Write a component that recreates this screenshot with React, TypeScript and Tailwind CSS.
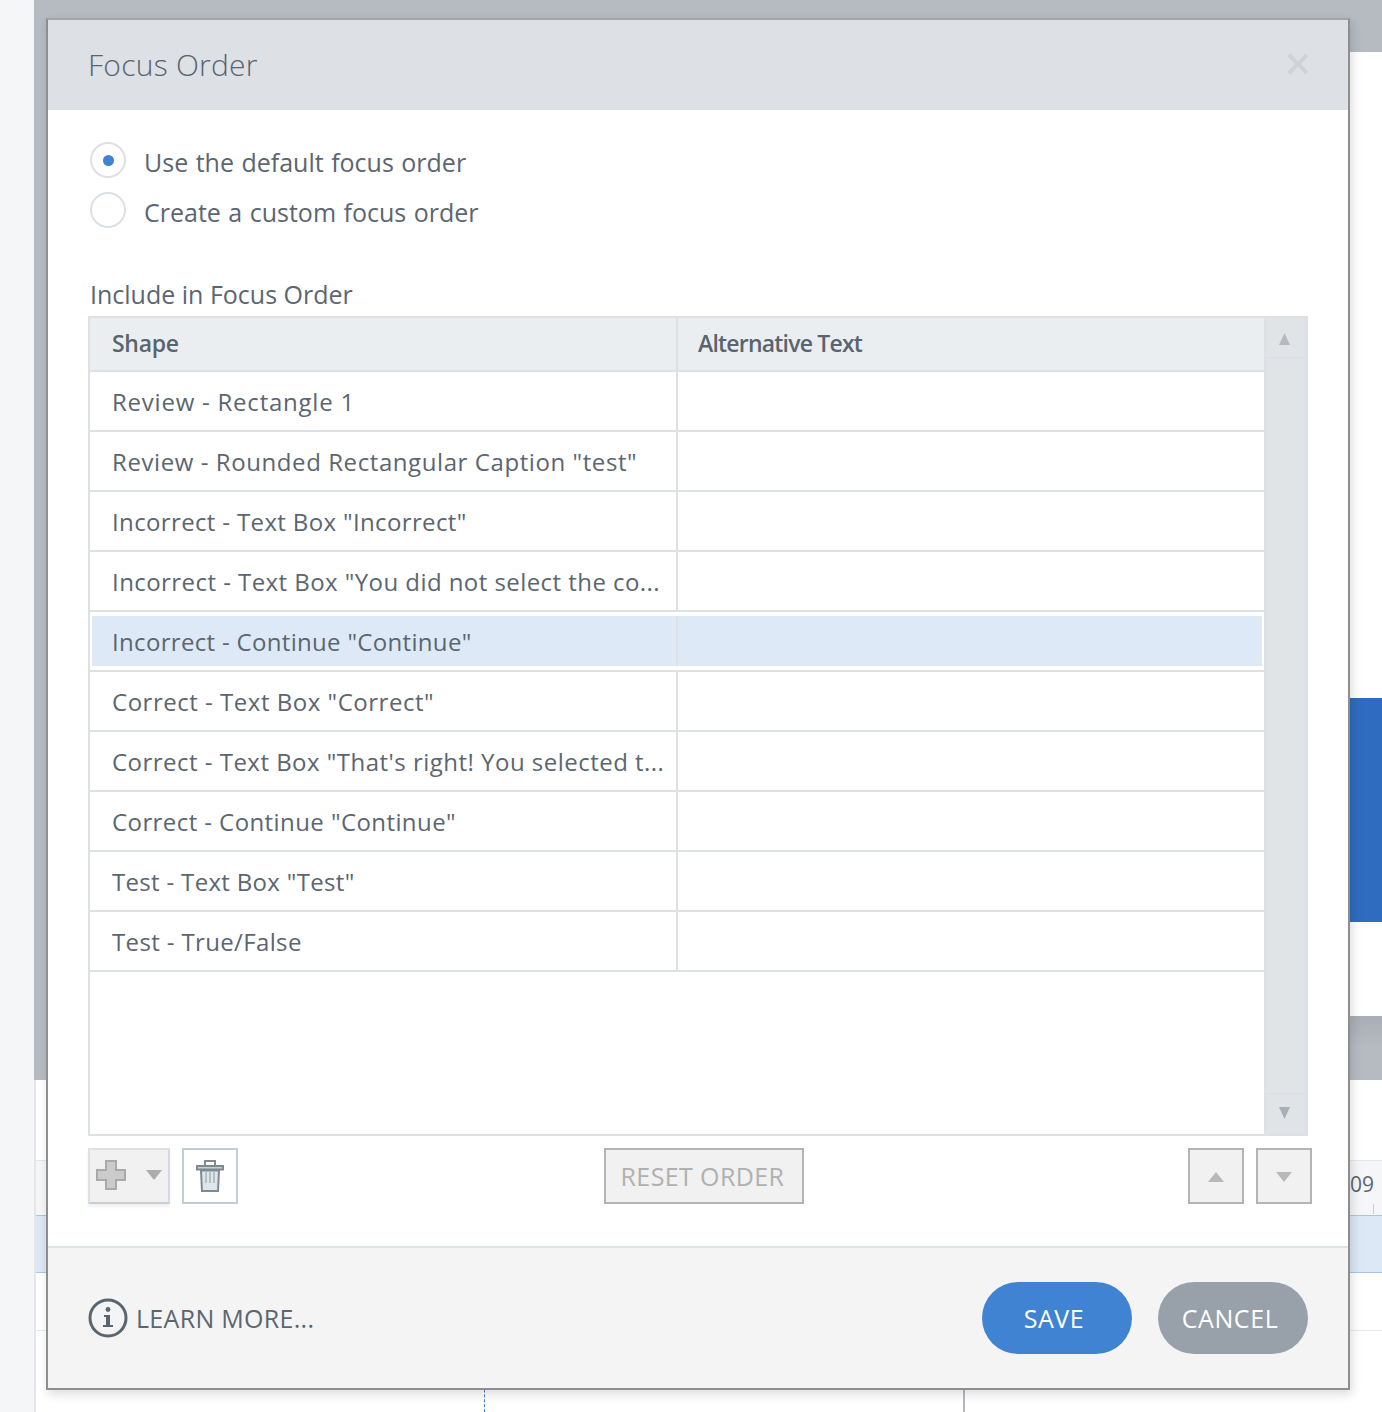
import React from "react";

const rows = [
  { t: 'Review - Rectangle 1', c: "tracking-[0.77px]" },
  { t: 'Review - Rounded Rectangular Caption "test"', c: "tracking-[0.58px]" },
  { t: 'Incorrect - Text Box "Incorrect"', c: "tracking-[0.36px]" },
  { t: 'Incorrect - Text Box "You did not select the co...', c: "tracking-[0.44px]" },
  { t: 'Incorrect - Continue "Continue"', c: "tracking-[0.32px]" },
  { t: 'Correct - Text Box "Correct"', c: "tracking-[0.52px]" },
  { t: 'Correct - Text Box "That\'s right! You selected t...', c: "tracking-[0.48px]" },
  { t: 'Correct - Continue "Continue"', c: "tracking-[0.42px]" },
  { t: 'Test - Text Box "Test"', c: "tracking-[0.32px]" },
  { t: 'Test - True/False', c: "tracking-[0.36px]" },
];

function Radio({ on, label }: { on?: boolean; label: string }) {
  return (
    <div className="flex h-[50px] items-start">
      <span className="flex h-9 w-9 shrink-0 items-center justify-center rounded-full border-2 border-[#dde0e4] bg-white">
        {on && <span className="h-[11px] w-[11px] rounded-full bg-[#3f83d2]" />}
      </span>
      <span className="ml-[18px] mt-[2px] text-[25px] leading-[36px] [word-spacing:1px] text-[#5b6670]">{label}</span>
    </div>
  );
}

function Tri({ up, color, w = 16, h = 10 }: { up?: boolean; color: string; w?: number; h?: number }) {
  return (
    <svg width={w} height={h} viewBox="0 0 16 10" className="block" preserveAspectRatio="none">
      <path d={up ? "M8 0L16 10H0Z" : "M0 0H16L8 10Z"} fill={color} />
    </svg>
  );
}

export default function App() {
  return (
    <div className="relative flex h-[1412px] w-[1382px] overflow-hidden bg-white font-['Open_Sans',sans-serif]">
      {/* page behind the dialog */}
      <div className="h-full w-[34px] shrink-0 bg-[#f4f6f8]" />
      <div className="flex min-w-0 flex-1 flex-col">
        <div className="h-[52px] bg-[#b6bbc2]" />
        <div className="flex h-[1028px]">
          <div className="flex-1 bg-[#b6bbc2]" />
          <div className="flex w-[32px] flex-col bg-white">
            <div className="h-[646px]" />
            <div className="h-[224px] bg-[#2f6cbf]" />
            <div className="h-[94px]" />
            <div className="h-[64px] bg-linear-to-b from-[#a9aeb6] via-[#b6bbc2] to-[#b6bbc2]" />
          </div>
        </div>
        <div className="flex flex-1 flex-col border-l-2 border-[#e3e6ea]">
          <div className="h-[81px] shrink-0 border-b border-[#e3e6ea]" />
          <div className="flex h-[54px] shrink-0 flex-col items-end bg-[#f5f6f8] pr-[8px]">
            <span className="mt-[9px] text-[21px] leading-[28px] text-[#5b6670]">09</span>
          </div>
          <div className="h-[58px] shrink-0 border-y border-[#a9c6e6] bg-[#dce8f5]" />
          <div className="h-[58px] shrink-0 border-b border-[#e6e8eb]" />
          <div className="flex flex-1">
            <div className="ml-[448px] h-full w-0 border-l border-dashed border-[#3f83d2]" />
            <div className="ml-[478px] h-full w-[2px] bg-[#b5b9bf]" />
          </div>
        </div>
      </div>
      <span className="absolute left-[1373px] top-[1204px] h-[10px] w-[1px] bg-[#c9ced4]" />

      {/* dialog */}
      <div className="absolute left-[46px] top-[18px] flex h-[1372px] w-[1304px] flex-col border-2 border-[#8e8e8e] border-t-[#a3a5a9] bg-white shadow-[2px_4px_10px_rgba(0,0,0,0.14)]">
        <div className="flex h-[90px] shrink-0 items-center justify-between bg-[#dde0e4] pl-[40px] pr-[38px]">
          <span className="pb-[2px] text-[30px] font-light tracking-[0.25px] text-[#59646e]">Focus Order</span>
          <svg width="22" height="22" viewBox="0 0 22 22" className="mb-[2px] mr-[1px]">
            <path d="M2 2L20 20M20 2L2 20" stroke="#d0d2d6" strokeWidth="4" />
          </svg>
        </div>

        <div className="flex min-h-0 flex-1 flex-col pl-[40px] pr-[40px] pt-[32px]">
          <div className="pl-[2px]">
            <Radio on label="Use the default focus order" />
            <Radio label="Create a custom focus order" />
          </div>
          <div className="mt-[34px] pl-[2px] text-[25px] leading-[36px] text-[#5b6670]">Include in Focus Order</div>

          <div className="mt-[4px] flex h-[820px] w-[1220px] shrink-0 border-2 border-[#dde0e4]">
            <div className="flex min-w-0 flex-1 flex-col">
              <div className="flex h-[54px] shrink-0 border-b-2 border-[#dde0e4] bg-[#ebeef1] text-[23px] text-[#59646e]">
                <div className="flex w-[588px] shrink-0 items-center border-r-2 border-[#dde0e4] pb-[2px] pl-[22px] font-semibold tracking-[-0.3px]">Shape</div>
                <div className="flex flex-1 items-center pb-[2px] pl-[20px] font-semibold tracking-[-0.8px]">Alternative Text</div>
              </div>
              {rows.map((r, i) => {
                const sel = i === 4;
                return (
                  <div key={r.t} className={"flex h-[60px] shrink-0 border-b-2 border-[#dde0e4] bg-white text-[24px] text-[#5b6670] " + r.c}>
                    <div className={"flex w-full " + (sel ? "mx-[2px] my-[4px] bg-[#dde9f6]" : "")}>
                      <div className={(sel ? "w-[586px] pl-[20px]" : "w-[588px] pl-[22px]") + " flex shrink-0 items-center whitespace-nowrap border-r-2 border-[#dde0e4] pt-[1px]"}>
                        {r.t}
                      </div>
                      <div className="flex-1" />
                    </div>
                  </div>
                );
              })}
            </div>
            <div className="flex w-[42px] shrink-0 flex-col border-x-2 border-[#dde0e4] bg-[#e1e4e6]">
              <div className="flex h-[41px] shrink-0 items-center justify-center border-b-2 border-[#dde0e4] pr-[1px] pt-[3px]">
                <Tri up color="#b4bac3" w={11} h={12} />
              </div>
              <div className="flex-1" />
              <div className="flex h-[41px] shrink-0 items-center justify-center border-t-2 border-[#dde0e4] pb-[3px] pr-[1px]">
                <Tri color="#a9afb8" w={11} h={12} />
              </div>
            </div>
          </div>

          <div className="mt-[12px] flex h-[56px] w-[1224px] shrink-0 items-stretch">
            <div className="flex w-[82px] items-center rounded-[1px] border-2 border-[#dde0e4] border-b-[#c6ced6] border-r-[#d4dae0] bg-[#f1f1f1] pb-[2px] pl-[6px] shadow-[0_3px_3px_rgba(0,0,0,0.06)]">
              <svg width="30" height="30" viewBox="0 0 30 30">
                <path d="M10 1H20V10H29V20H20V29H10V20H1V10H10Z" fill="#cbcbcb" stroke="#a9a9a9" strokeWidth="2" />
              </svg>
              <span className="ml-[20px]"><Tri color="#acacac" w={16} h={10} /></span>
            </div>
            <div className="ml-[12px] flex w-[56px] items-center justify-center border-2 border-[#c2cdd5] bg-white">
              <svg width="28" height="32" viewBox="0 0 28 32">
                <path d="M9 5V1H19V5" fill="none" stroke="#7f8a90" strokeWidth="2" />
                <path d="M1 6H27V9.5H1Z" fill="#c3d0d8" stroke="#7f8a90" strokeWidth="2" />
                <path d="M5 10.5L6 31H22L23 10.5Z" fill="#dfe7ec" stroke="#7f8a90" strokeWidth="2" />
                <path d="M10 11V23M14 11V23M18 11V23" stroke="#b4c0c8" strokeWidth="2" />
              </svg>
            </div>
            <div className="ml-[366px] flex w-[200px] items-center justify-center border-2 border-[#b4b4b4] bg-[#f1f1f1] pr-[3px] pt-[1px] text-[25px] font-medium tracking-[0.4px] text-[#b0b0b0]">RESET ORDER</div>
            <div className="ml-[384px] flex w-[56px] items-center justify-center border-2 border-[#b4b4b4] bg-[#f1f1f1] pt-[2px]">
              <Tri up color="#b8b8b8" />
            </div>
            <div className="ml-[12px] flex w-[56px] items-center justify-center border-2 border-[#b4b4b4] bg-[#f1f1f1] pt-[2px]">
              <Tri color="#b8b8b8" />
            </div>
          </div>
        </div>

        <div className="flex h-[142px] shrink-0 items-center border-t-2 border-[#dfe3e7] bg-[#f4f4f4] pl-[40px] pr-[40px]">
          <svg width="40" height="40" viewBox="0 0 40 40" className="shrink-0">
            <circle cx="20" cy="20" r="18" fill="none" stroke="#5a666f" strokeWidth="3" />
            <circle cx="20" cy="11.5" r="2.4" fill="#5a666f" />
            <path d="M16 17H22V27H25V29H15V27H18V19H16Z" fill="#5a666f" />
          </svg>
          <span className="ml-[8px] pt-[1px] text-[25px] tracking-[0.3px] text-[#5b6670]">LEARN MORE...</span>
          <div className="flex-1" />
          <div className="flex h-[72px] w-[150px] items-center justify-center rounded-full bg-[#3f83d2] pr-[6px] pt-[1px] text-[25px] tracking-[0.5px] text-white">SAVE</div>
          <div className="ml-[26px] flex h-[72px] w-[150px] items-center justify-center rounded-full bg-[#98a0a9] pr-[6px] pt-[1px] text-[25px] tracking-[0.6px] text-white">CANCEL</div>
        </div>
      </div>
    </div>
  );
}
